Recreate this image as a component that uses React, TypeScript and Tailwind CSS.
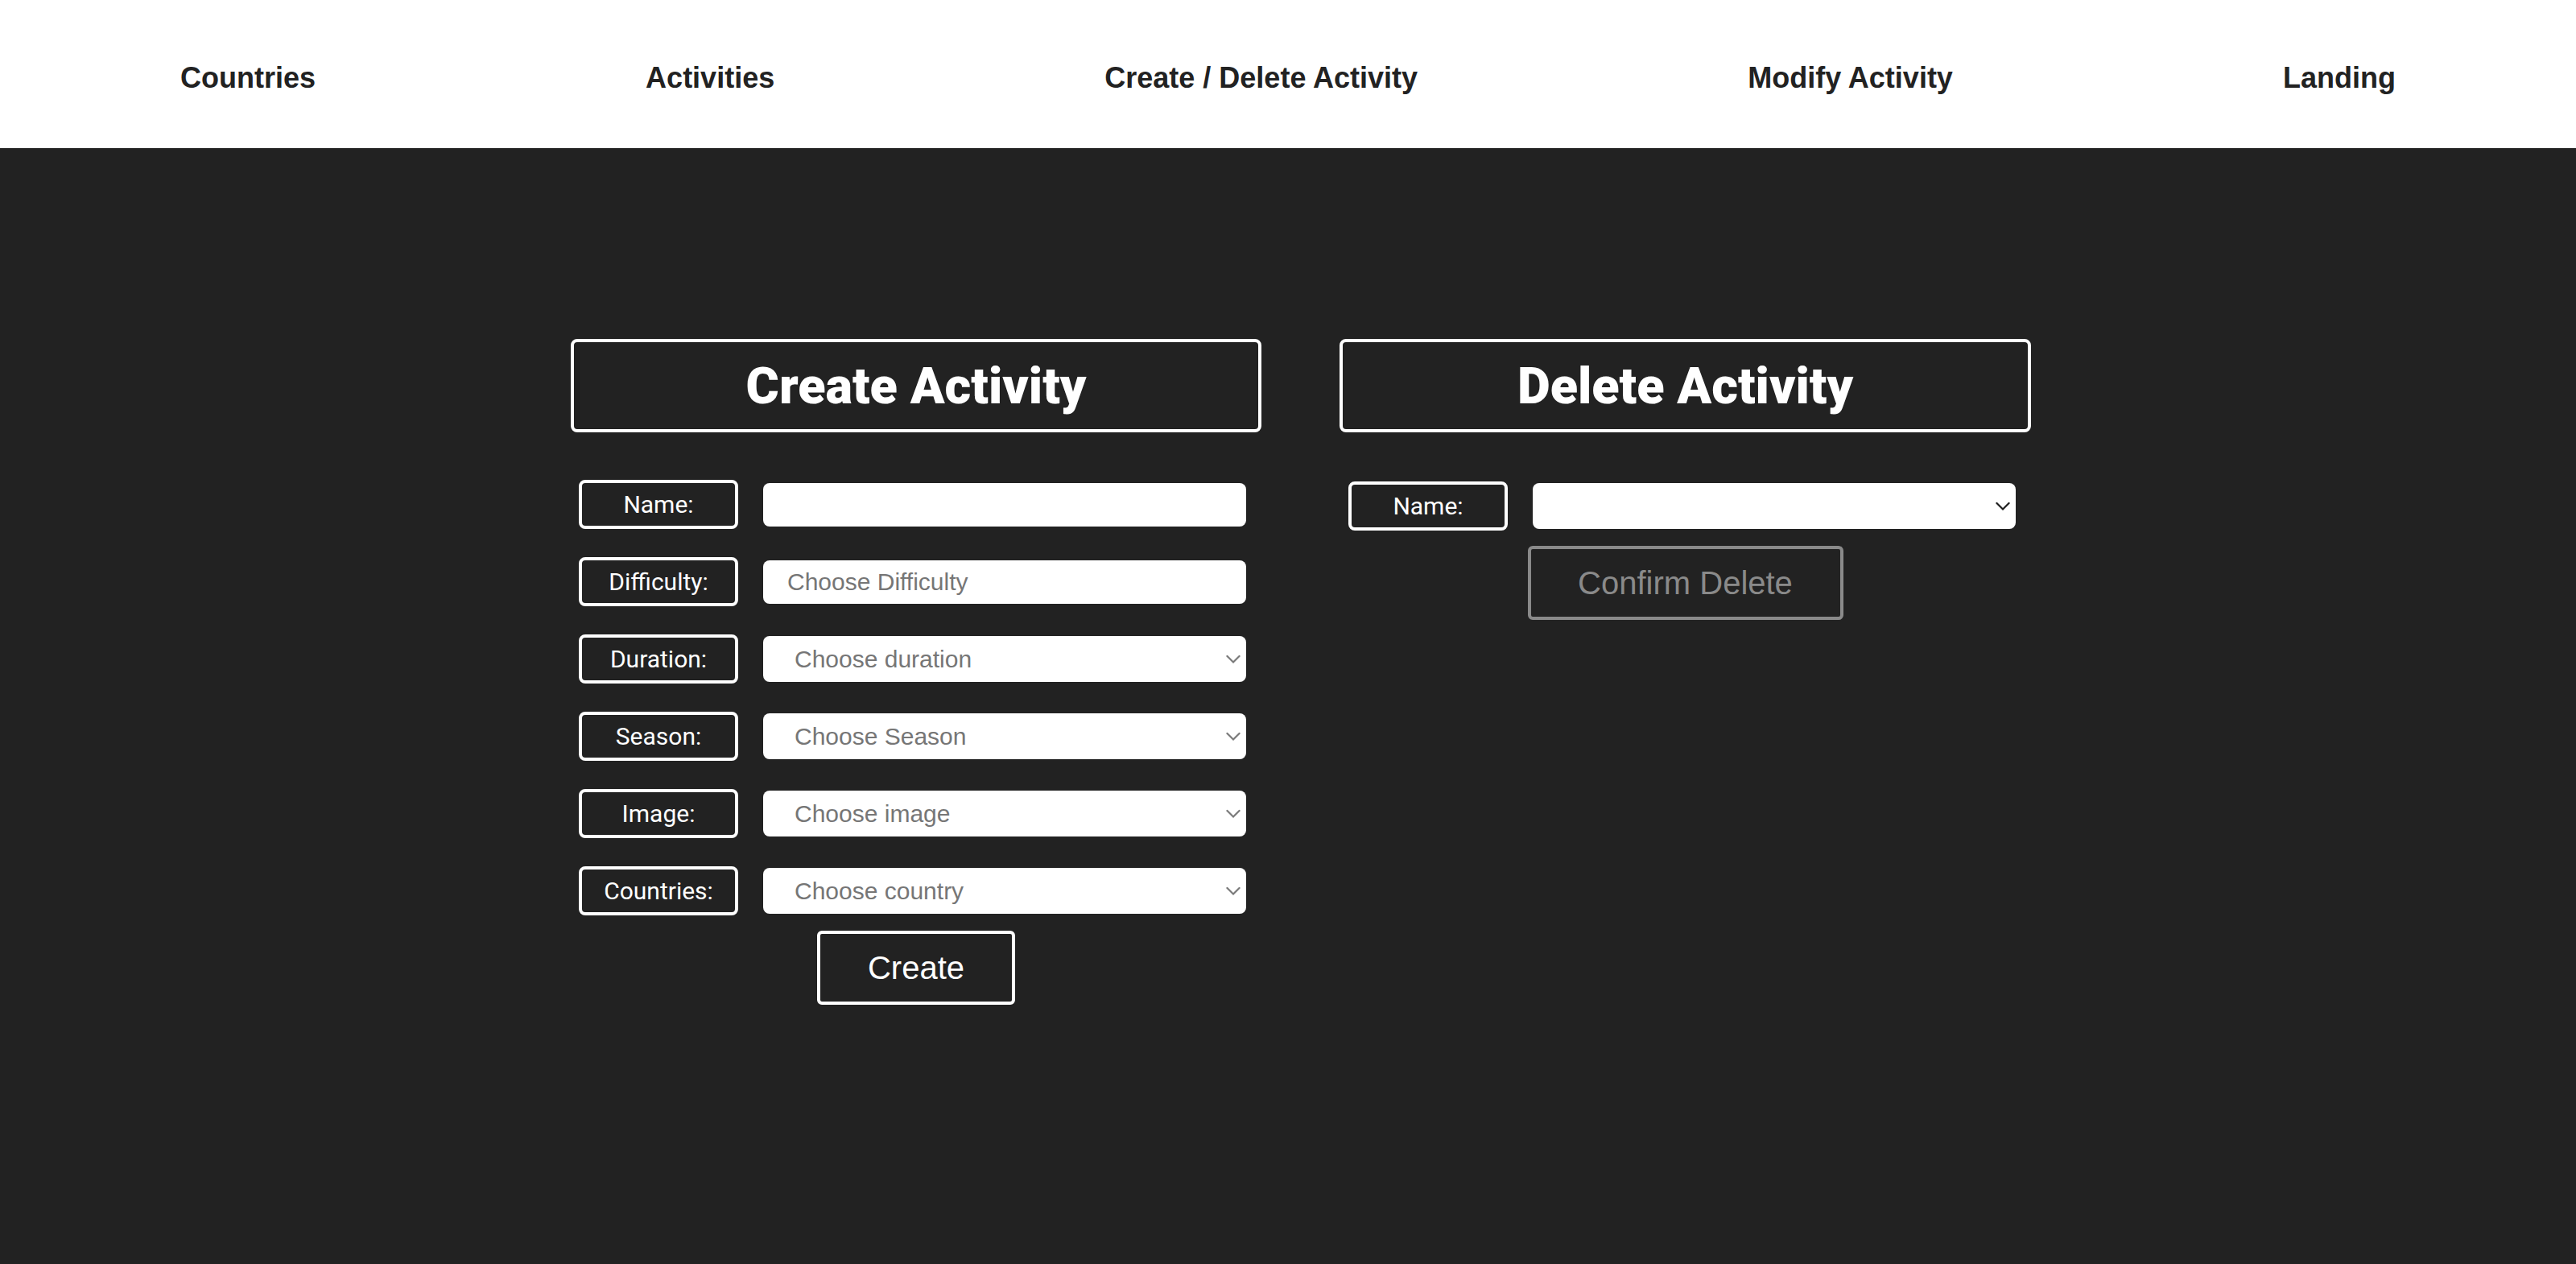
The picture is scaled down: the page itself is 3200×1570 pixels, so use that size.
import React from "react";

const navItems = ["Countries", "Activities", "Create / Delete Activity", "Modify Activity", "Landing"];

function Chevron({ dark }: { dark?: boolean }) {
  return (
    <svg
      className="pointer-events-none absolute right-[7px] top-1/2 -translate-y-1/2"
      width="18"
      height="11"
      viewBox="0 0 18 11"
      fill="none"
    >
      <polyline
        points="1.5,1.5 9,9 16.5,1.5"
        stroke={dark ? "#1f1f1f" : "#7a7a7a"}
        strokeWidth="2.2"
        strokeLinecap="square"
      />
    </svg>
  );
}

function Label({ text }: { text: string }) {
  return (
    <div className="w-[198px] h-[61px] shrink-0 border-[4px] border-white rounded-[8px] flex items-center justify-center text-white text-[30px] font-['Roboto',sans-serif]">
      {text}
    </div>
  );
}

function TextRow({ label, placeholder }: { label: string; placeholder?: string }) {
  return (
    <div className="flex items-center gap-[31px]">
      <Label text={label} />
      <input
        placeholder={placeholder}
        className="w-[600px] h-[54px] bg-white rounded-[8px] pl-[30px] text-[30px] text-[#222] placeholder:text-[#767676] outline-none font-['Liberation_Sans',Arial,sans-serif]"
      />
    </div>
  );
}

function SelectRow({ label, placeholder, dark }: { label: string; placeholder?: string; dark?: boolean }) {
  return (
    <div className="flex items-center gap-[31px]">
      <Label text={label} />
      <div className="relative w-[600px] h-[57px] bg-white rounded-[8px] flex items-center">
        <span className="pl-[39px] text-[30px] text-[#767676] font-['Liberation_Sans',Arial,sans-serif]">
          {placeholder}
        </span>
        <Chevron dark={dark} />
      </div>
    </div>
  );
}

function Heading({ text }: { text: string }) {
  return (
    <div className="w-full h-[116px] border-[4px] border-white rounded-[8px] flex items-center justify-center">
      <h1 className="text-white text-[63px] font-black font-['Roboto',sans-serif] leading-none">{text}</h1>
    </div>
  );
}

export default function App() {
  return (
    <div className="min-h-screen flex flex-col bg-[#222222]">
      <nav className="h-[184px] bg-white flex items-center justify-between px-[224px] pt-[10px]">
        {navItems.map((n) => (
          <a
            key={n}
            className="text-[36px] font-bold text-[#222222] font-['Liberation_Sans',Arial,sans-serif] cursor-pointer"
          >
            {n}
          </a>
        ))}
      </nav>
      <main className="flex-1 flex justify-center items-start gap-[97px] pl-[32px] pt-[237px]">
        <section className="w-[858px] flex flex-col">
          <Heading text="Create Activity" />
          <div className="flex flex-col gap-[35px] pl-[10px] mt-[59px]">
            <TextRow label="Name:" />
            <TextRow label="Difficulty:" placeholder="Choose Difficulty" />
            <SelectRow label="Duration:" placeholder="Choose duration" />
            <SelectRow label="Season:" placeholder="Choose Season" />
            <SelectRow label="Image:" placeholder="Choose image" />
            <SelectRow label="Countries:" placeholder="Choose country" />
          </div>
          <div className="flex justify-center mt-[19px]">
            <button className="w-[246px] h-[92px] border-[4px] border-white rounded-[6px] text-white text-[40px] font-['Liberation_Sans',Arial,sans-serif]">
              Create
            </button>
          </div>
        </section>
        <section className="w-[859px] flex flex-col">
          <Heading text="Delete Activity" />
          <div className="flex flex-col pl-[11px] mt-[61px]">
            <SelectRow label="Name:" dark />
          </div>
          <div className="flex justify-center mt-[19px]">
            <button className="w-[392px] h-[92px] border-[4px] border-[#8a8a8a] rounded-[6px] text-[#8a8a8a] text-[40px] font-['Liberation_Sans',Arial,sans-serif]">
              Confirm Delete
            </button>
          </div>
        </section>
      </main>
    </div>
  );
}
